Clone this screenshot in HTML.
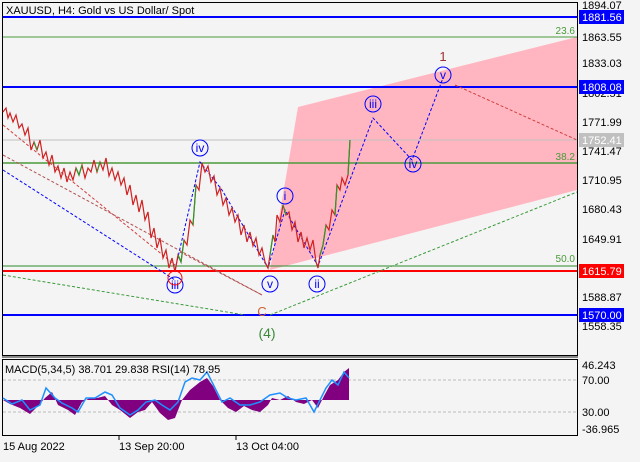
<!DOCTYPE html>
<html><head><meta charset="utf-8"><style>
body{margin:0;background:#f4f4f4;width:640px;height:457px;overflow:hidden;font-family:"Liberation Sans",sans-serif}
svg text{font-family:"Liberation Sans",sans-serif}
</style></head><body>
<svg width="640" height="457" viewBox="0 0 640 457" xmlns="http://www.w3.org/2000/svg">
<rect width="640" height="457" fill="#f4f4f4"/>
<rect x="2.5" y="2.5" width="575" height="353" fill="none" stroke="#000"/>
<rect x="2.5" y="359.5" width="575" height="76" fill="none" stroke="#000"/>
<line x1="2" y1="357" x2="578" y2="357" stroke="#888" stroke-width="2"/>
<polygon points="298,107 577,37 577,190 270,270" fill="#ffb6c1"/>
<line x1="3" y1="17" x2="577" y2="17" stroke="#0000ff" stroke-width="2"/>
<line x1="3" y1="37" x2="577" y2="37" stroke="#4a9a3a" stroke-width="1"/>
<line x1="3" y1="87" x2="577" y2="87" stroke="#0000ff" stroke-width="2"/>
<line x1="3" y1="140" x2="577" y2="140" stroke="#c0c0c0" stroke-width="1"/>
<line x1="3" y1="163" x2="577" y2="163" stroke="#4a9a3a" stroke-width="1.5"/>
<line x1="3" y1="266" x2="577" y2="266" stroke="#2a8a2a" stroke-width="1"/>
<line x1="3" y1="271" x2="577" y2="271" stroke="#ff0000" stroke-width="2"/>
<line x1="3" y1="315" x2="577" y2="315" stroke="#0000ff" stroke-width="2"/>
<text x="575" y="34" font-size="10" fill="#4a9a3a" text-anchor="end">23.6</text>
<text x="575" y="160" font-size="10" fill="#4a9a3a" text-anchor="end">38.2</text>
<text x="575" y="262" font-size="10" fill="#4a9a3a" text-anchor="end">50.0</text>
<g fill="none" stroke-width="1" stroke-dasharray="3,2">
<path d="M3,125 L175,265" stroke="#d04040"/>
<path d="M3,155 L262,295" stroke="#b05050"/>
<path d="M180,252 L262,295" stroke="#b05050"/>
<path d="M3,170 L175,280" stroke="#0000ff"/>
<path d="M3,275 L245,315" stroke="#3a9a3a"/>
<path d="M270,315 L577,192" stroke="#3a9a3a"/>
<path d="M455,85 L577,140" stroke="#d04040"/>
<path d="M175,270 L200,162 L222,190 L268,268 L285,210 L318,266 L373,118 L412,160 L443,78" stroke="#0000ff"/>
</g>
<path d="M3,112 L6,108 L8,118 L10,113 L13,122 L16,115 L19,128 L22,124 L25,135 L28,128 L31,150 L34,142 L37,150 L40,140 L43,158 L46,152 L49,165 L52,155 L55,172 L58,166 L61,178 L64,168 L67,182 L70,172 L73,180 L76,168 L79,175 L82,165 L85,178 L88,168 L91,172 L94,160 L97,172 L100,162 L103,170 L106,158 L109,176 L112,168 L115,180 L118,172 L121,185 L124,178 L127,195 L130,185 L133,205 L136,195 L139,212 L142,200 L145,220 L148,212 L151,238 L154,228 L157,248 L160,238 L163,258 L166,250 L169,268 L172,258 L175,272 L178,255 L181,262 L184,240 L187,245 L190,220 L193,225 L196,185 L199,190 L202,163 L205,172 L208,166 L211,182 L214,176 L217,195 L220,188 L223,205 L226,198 L229,215 L232,208 L235,222 L238,215 L241,235 L244,225 L247,242 L250,232 L253,246 L256,238 L259,255 L262,248 L265,262 L268,268 L270,255 L273,235 L275,242 L277,215 L280,222 L283,205 L286,215 L289,212 L292,230 L295,222 L298,242 L301,232 L304,248 L307,238 L310,250 L313,240 L316,262 L318,268 L320,255 L323,245 L326,225 L329,230 L332,210 L335,215 L337,185 L340,190 L342,178 L345,185 L348,175 L350,140" fill="none" stroke="#d02020" stroke-width="1.2"/>
<path d="M34,142 L37,150 M76,168 L79,175 L82,165 M97,172 L100,162 M178,255 L181,262 L184,240 M193,225 L196,185 M270,255 L273,235 M283,205 L286,215 M320,255 L323,245 L326,225 M335,215 L337,185 M348,175 L350,140" fill="none" stroke="#2a9a2a" stroke-width="1.2"/>
<g font-size="12" fill="#0000ff" text-anchor="middle" stroke="none">
<circle cx="200" cy="148" r="8" fill="none" stroke="#0000ff"/><text x="200" y="152">iv</text>
<circle cx="285" cy="196" r="8" fill="none" stroke="#0000ff"/><text x="285" y="200">i</text>
<circle cx="373" cy="104" r="8" fill="none" stroke="#0000ff"/><text x="373" y="108">iii</text>
<circle cx="413" cy="164" r="8" fill="none" stroke="#0000ff"/><text x="413" y="168">iv</text>
<circle cx="443" cy="75" r="8" fill="none" stroke="#0000ff"/><text x="443" y="79">v</text>
<circle cx="175" cy="285" r="8" fill="none" stroke="#0000ff"/><text x="175" y="289">iii</text>
<circle cx="270" cy="284" r="8" fill="none" stroke="#0000ff"/><text x="270" y="288">v</text>
<circle cx="317" cy="284" r="8" fill="none" stroke="#0000ff"/><text x="317" y="288">ii</text>
</g>
<circle cx="175" cy="278" r="7" fill="none" stroke="#ff0000"/>
<text x="443" y="61" font-size="13" fill="#a03030" text-anchor="middle" font-family="Liberation Serif">1</text>
<text x="262" y="316" font-size="13" fill="#d06030" text-anchor="middle">C</text>
<text x="267" y="338" font-size="14" fill="#3a8a3a" text-anchor="middle">(4)</text>
<text x="6" y="14" font-size="11" fill="#000">XAUUSD, H4:  Gold vs US Dollar/ Spot</text>
<g font-size="11" fill="#000">
<text x="582" y="9">1894.07</text>
<text x="582" y="41">1863.55</text>
<text x="582" y="67">1833.03</text>
<text x="582" y="97">1802.51</text>
<text x="582" y="126">1771.99</text>
<text x="582" y="155">1741.47</text>
<text x="582" y="184">1710.95</text>
<text x="582" y="213">1680.43</text>
<text x="582" y="243">1649.91</text>
<text x="582" y="301">1588.87</text>
<text x="582" y="330">1558.35</text>
</g>
<g font-size="11">
<rect x="579" y="10" width="45" height="14" fill="#0000ff"/><text x="582" y="21" fill="#fff">1881.56</text>
<rect x="579" y="80" width="45" height="14" fill="#0000ff"/><text x="582" y="91" fill="#fff">1808.08</text>
<rect x="579" y="133" width="45" height="14" fill="#c0c0c0"/><text x="582" y="144" fill="#fff">1752.41</text>
<rect x="579" y="264" width="45" height="14" fill="#ff0000"/><text x="582" y="275" fill="#fff">1615.79</text>
<rect x="579" y="308" width="45" height="14" fill="#0000ff"/><text x="582" y="319" fill="#fff">1570.00</text>
</g>
<line x1="3" y1="380" x2="577" y2="380" stroke="#bbb" stroke-dasharray="3,2"/>
<line x1="3" y1="412" x2="577" y2="412" stroke="#bbb" stroke-dasharray="3,2"/>
<path d="M3,400 L10,404 L20,408 L30,414 L38,406 L45,398 L52,392 L58,405 L68,410 L75,415 L82,402 L90,398 L97,398 L105,396 L112,405 L120,410 L130,418 L138,412 L145,410 L152,402 L160,413 L168,420 L175,418 L182,400 L190,390 L200,382 L207,378 L213,386 L220,400 L228,408 L236,412 L244,406 L252,410 L260,412 L268,405 L272,398 L280,400 L288,396 L296,402 L304,404 L312,400 L318,408 L324,396 L330,385 L338,380 L344,372 L349,368 L349,400 L3,400 Z" fill="#800080"/>
<path d="M3,398 L12,404 L22,400 L30,410 L40,405 L46,388 L55,398 L62,403 L72,408 L78,412 L86,398 L95,398 L105,392 L112,395 L120,408 L130,415 L138,410 L146,402 L155,400 L162,405 L170,410 L178,402 L185,382 L192,378 L200,380 L207,372 L215,388 L222,402 L230,398 L240,405 L250,405 L260,402 L270,395 L280,393 L288,398 L296,400 L306,398 L314,412 L320,400 L326,388 L332,380 L338,385 L344,372 L349,378" fill="none" stroke="#1e90ff" stroke-width="1.5"/>
<text x="5" y="373" font-size="11" fill="#000">MACD(5,34,5) 38.701 29.838 RSI(14) 78.95</text>
<g font-size="11" fill="#000">
<text x="582" y="369">46.243</text>
<text x="582" y="384">70.00</text>
<text x="582" y="416">30.00</text>
<text x="582" y="433">-36.965</text>
</g>
<g font-size="11" fill="#000">
<line x1="119" y1="436" x2="119" y2="440" stroke="#000"/>
<line x1="236" y1="436" x2="236" y2="440" stroke="#000"/>
<text x="3" y="450">15 Aug 2022</text>
<text x="119" y="450">13 Sep 20:00</text>
<text x="236" y="450">13 Oct 04:00</text>
</g>
</svg>
</body></html>
